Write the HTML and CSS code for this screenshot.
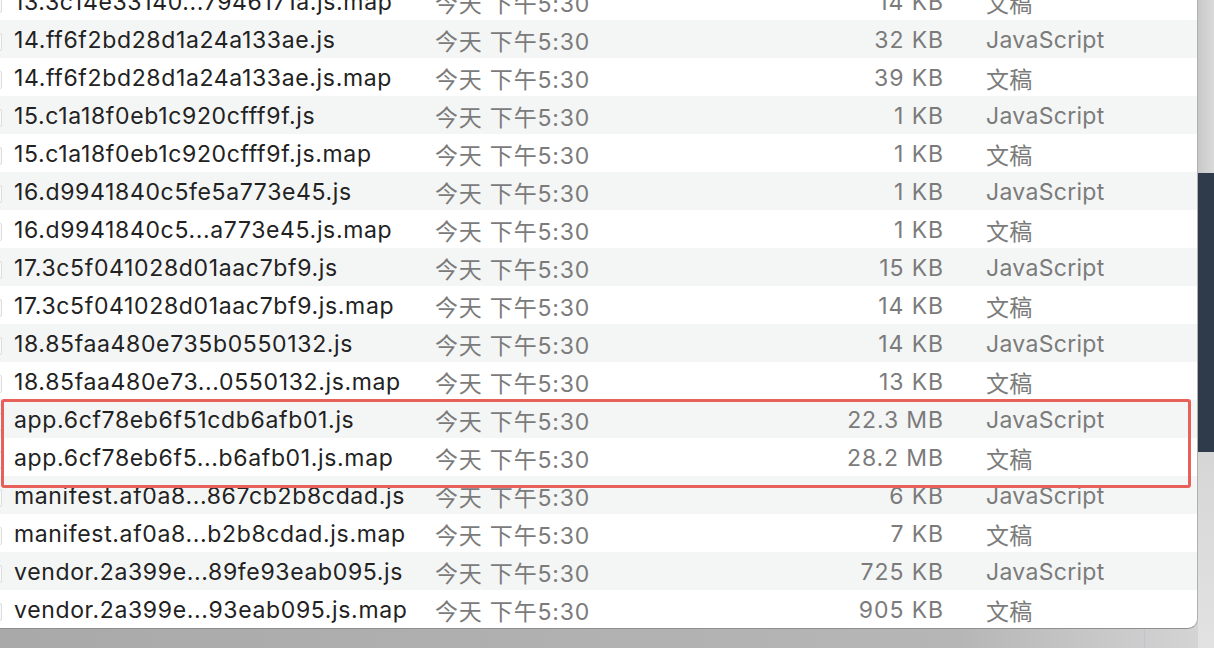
FILE: index.html
```html
<!DOCTYPE html>
<html lang="zh">
<head>
<meta charset="utf-8">
<title>Finder</title>
<link rel="stylesheet" href="styles.css">
</head>
<body>
<div class="desktop">
  <div class="finder-col">
    <div class="finder">
      <div class="list">
        <div class="row"><span class="name">13.3c14e33140...7946171a.js.map</span><span class="date">今天 下午5:30</span><span class="size">14 KB</span><span class="kind">文稿</span></div>
        <div class="row"><span class="name">14.ff6f2bd28d1a24a133ae.js</span><span class="date">今天 下午5:30</span><span class="size">32 KB</span><span class="kind">JavaScript</span></div>
        <div class="row"><span class="name">14.ff6f2bd28d1a24a133ae.js.map</span><span class="date">今天 下午5:30</span><span class="size">39 KB</span><span class="kind">文稿</span></div>
        <div class="row"><span class="name">15.c1a18f0eb1c920cfff9f.js</span><span class="date">今天 下午5:30</span><span class="size">1 KB</span><span class="kind">JavaScript</span></div>
        <div class="row"><span class="name">15.c1a18f0eb1c920cfff9f.js.map</span><span class="date">今天 下午5:30</span><span class="size">1 KB</span><span class="kind">文稿</span></div>
        <div class="row"><span class="name">16.d9941840c5fe5a773e45.js</span><span class="date">今天 下午5:30</span><span class="size">1 KB</span><span class="kind">JavaScript</span></div>
        <div class="row"><span class="name">16.d9941840c5...a773e45.js.map</span><span class="date">今天 下午5:30</span><span class="size">1 KB</span><span class="kind">文稿</span></div>
        <div class="row"><span class="name">17.3c5f041028d01aac7bf9.js</span><span class="date">今天 下午5:30</span><span class="size">15 KB</span><span class="kind">JavaScript</span></div>
        <div class="row"><span class="name">17.3c5f041028d01aac7bf9.js.map</span><span class="date">今天 下午5:30</span><span class="size">14 KB</span><span class="kind">文稿</span></div>
        <div class="row"><span class="name">18.85faa480e735b0550132.js</span><span class="date">今天 下午5:30</span><span class="size">14 KB</span><span class="kind">JavaScript</span></div>
        <div class="row"><span class="name">18.85faa480e73...0550132.js.map</span><span class="date">今天 下午5:30</span><span class="size">13 KB</span><span class="kind">文稿</span></div>
        <div class="row"><span class="name">app.6cf78eb6f51cdb6afb01.js</span><span class="date">今天 下午5:30</span><span class="size">22.3 MB</span><span class="kind">JavaScript</span></div>
        <div class="row"><span class="name">app.6cf78eb6f5...b6afb01.js.map</span><span class="date">今天 下午5:30</span><span class="size">28.2 MB</span><span class="kind">文稿</span></div>
        <div class="row"><span class="name">manifest.af0a8...867cb2b8cdad.js</span><span class="date">今天 下午5:30</span><span class="size">6 KB</span><span class="kind">JavaScript</span></div>
        <div class="row"><span class="name">manifest.af0a8...b2b8cdad.js.map</span><span class="date">今天 下午5:30</span><span class="size">7 KB</span><span class="kind">文稿</span></div>
        <div class="row"><span class="name">vendor.2a399e...89fe93eab095.js</span><span class="date">今天 下午5:30</span><span class="size">725 KB</span><span class="kind">JavaScript</span></div>
        <div class="row"><span class="name">vendor.2a399e...93eab095.js.map</span><span class="date">今天 下午5:30</span><span class="size">905 KB</span><span class="kind">文稿</span></div>
      </div>
      <div class="highlight"></div>
    </div>
    <div class="below">
      <div class="below-line"></div>
    </div>
  </div>
  <div class="side">
    <div class="side-top"></div>
    <div class="side-dark"></div>
    <div class="side-bottom"></div>
  </div>
</div>
</body>
</html>
```

FILE: styles.css
```css
html, body {
  margin: 0;
  padding: 0;
}
body {
  width: 1214px;
  height: 648px;
  overflow: hidden;
  font-family: Inter, "Noto Sans CJK SC", sans-serif;
  background: #c8c8c8;
}
.desktop {
  display: flex;
  height: 648px;
}
.finder-col {
  width: 1198px;
  display: flex;
  flex-direction: column;
  background: linear-gradient(to right, #a9a9a9 0%, #b6b6b6 80%, #d4d4d4 100%);
}
.finder {
  position: relative;
  margin-top: -18px;
  background: #ffffff;
  border-right: 1px solid #b0b0b0;
  border-bottom: 1px solid #8f8f8f;
  border-bottom-right-radius: 10px;
  overflow: hidden;
}
.list {
  display: flex;
  flex-direction: column;
}
.row {
  position: relative;
  display: grid;
  grid-template-columns: 421px 300px 208px 1fr;
  align-items: center;
  height: 38px;
  padding-left: 14px;
  padding-top: 1px;
  box-sizing: border-box;
  font-size: 23px;
  letter-spacing: 0.5px;
  color: #7b7b7b;
  white-space: nowrap;
}
.row:nth-child(even) {
  background: #f4f5f5;
}
.row::before {
  content: "";
  position: absolute;
  left: -4px;
  top: 13px;
  width: 4px;
  height: 16px;
  border: 1px solid #dcdcdc;
  border-radius: 2px;
  background: #fbfbfb;
}
.name {
  color: #222222;
  letter-spacing: 0.65px;
}
.date {
  letter-spacing: 0.8px;
}
.size {
  text-align: right;
  letter-spacing: 0.9px;
  margin-right: -1px;
}
.kind {
  padding-left: 43px;
  letter-spacing: 0.3px;
}
.highlight {
  position: absolute;
  left: 1px;
  top: 417px;
  width: 1184px;
  height: 83px;
  border: 3px solid #e8605a;
  border-radius: 3px;
}
.below {
  flex: 1;
  position: relative;
}
.below-line {
  position: absolute;
  left: 1144px;
  top: 0;
  bottom: 0;
  width: 1px;
  background: #c4c4d0;
}
.side {
  flex: 1;
  display: flex;
  flex-direction: column;
}
.side-top {
  height: 173px;
  background: linear-gradient(to right, #c8c8c8, #dadada);
}
.side-dark {
  height: 279px;
  background: #2f3a4b;
}
.side-bottom {
  flex: 1;
  background: linear-gradient(to bottom, #d6d6d6, #e2e2e2);
}
```
